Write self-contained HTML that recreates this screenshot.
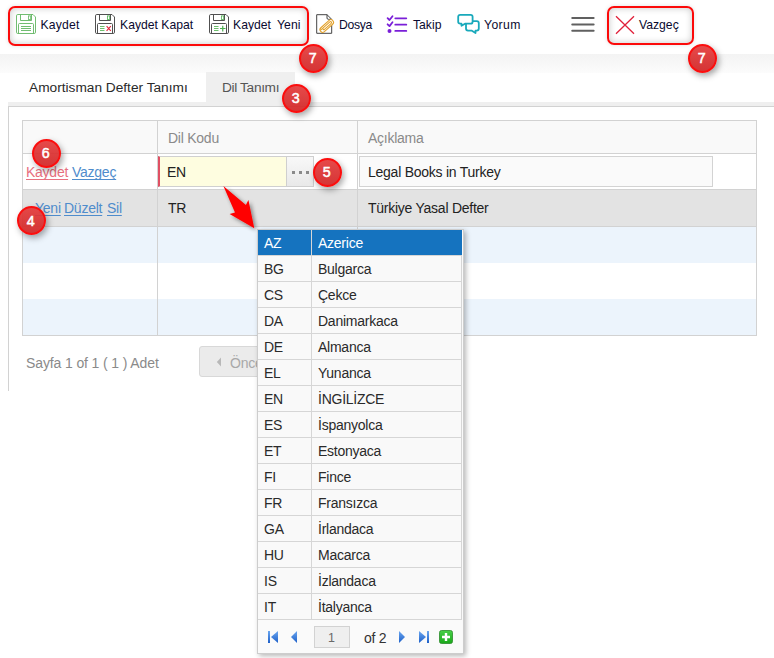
<!DOCTYPE html>
<html><head><meta charset="utf-8">
<style>
html,body{margin:0;padding:0;width:774px;height:658px;overflow:hidden;background:#fff;position:relative;font-family:"Liberation Sans",sans-serif;}
.a{position:absolute;white-space:nowrap;}
.tb{font-size:12.2px;color:#0a0a30;line-height:14px;}
.g{font-size:14px;line-height:16px;letter-spacing:-0.25px;}
.rbox{position:absolute;border:2.5px solid #fc0a0a;border-radius:7px;box-shadow:inset 0 0 7px rgba(0,0,0,0.22),0 0 4px rgba(0,0,0,0.12);box-sizing:border-box;}
.badge{position:absolute;width:29px;height:29px;border-radius:50%;background:linear-gradient(rgba(228,60,60,0.93),rgba(210,38,38,0.93));border:2px solid #fb0e0e;box-sizing:border-box;box-shadow:2px 3px 6px rgba(0,0,0,0.35);color:#fff;}
.badge span{position:absolute;left:0;right:0;top:3.5px;text-align:center;font-family:"Liberation Sans",sans-serif;font-weight:normal;-webkit-text-stroke:0.55px #fff;font-size:15.5px;line-height:17px;transform:translateX(-0.8px) scaleX(0.92);}
.lnk{text-decoration:underline;text-underline-offset:1.5px;text-decoration-skip-ink:none;}
</style></head><body>

<!-- toolbar band -->
<div class="a" style="left:0;top:54px;width:774px;height:19px;background:linear-gradient(#f3f3f3,#fcfcfc);"></div>

<div class="rbox" style="left:8px;top:5.5px;width:300.5px;height:40.5px;"></div>
<div class="rbox" style="left:607px;top:5.5px;width:87.3px;height:39px;"></div>

<!-- Kaydet icon -->
<svg class="a" style="left:16px;top:14px" width="20" height="20" viewBox="0 0 20 20" fill="none" stroke="#62b562" stroke-width="0.9">
<path d="M0.5,1.8 Q0.5,0.5 1.8,0.5 H17 L19.5,3 V18.2 Q19.5,19.5 18.2,19.5 H1.8 Q0.5,19.5 0.5,18.2 Z"/>
<path d="M4.5,0.5 V6.5 H15.5 V0.5"/><rect x="12.4" y="1.9" width="2.3" height="3.6" stroke-width="0.8"/>
<path d="M2.5,19.5 V10.5 Q2.5,9.5 3.5,9.5 H16.5 Q17.5,9.5 17.5,10.5 V19.5"/>
<path d="M5,12.5 H15 M5,14.5 H15 M5,16.5 H15"/>
</svg>
<div class="a tb" style="left:40.5px;top:18px;letter-spacing:0.2px;">Kaydet</div>

<!-- Kaydet Kapat icon -->
<svg class="a" style="left:95px;top:14px" width="20" height="20" viewBox="0 0 20 20" fill="none" stroke="#505050" stroke-width="1">
<path d="M0.5,1.8 Q0.5,0.5 1.8,0.5 H17 L19.5,3 V18.2 Q19.5,19.5 18.2,19.5 H1.8 Q0.5,19.5 0.5,18.2 Z"/>
<path d="M4.5,0.5 V6.5 H15.5 V0.5"/><rect x="12.4" y="1.9" width="2.3" height="3.6" stroke-width="0.8" stroke="#4caf50"/>
<path d="M2.5,19.5 V10.5 Q2.5,9.5 3.5,9.5 H16.5 Q17.5,9.5 17.5,10.5 V19.5"/>
<path d="M5,12.5 H9.5 M5,14.5 H9.5 M5,16.5 H9.5" stroke="#5cb85c" stroke-width="0.9"/>
<path d="M11.6,12.2 L15.8,16.8 M15.8,12.2 L11.6,16.8" stroke="#e3263c" stroke-width="1.1"/>
</svg>
<div class="a tb" style="left:120px;top:18px;">Kaydet Kapat</div>

<!-- Kaydet Yeni icon -->
<svg class="a" style="left:209px;top:14px" width="20" height="20" viewBox="0 0 20 20" fill="none" stroke="#505050" stroke-width="1">
<path d="M0.5,1.8 Q0.5,0.5 1.8,0.5 H17 L19.5,3 V18.2 Q19.5,19.5 18.2,19.5 H1.8 Q0.5,19.5 0.5,18.2 Z"/>
<path d="M4.5,0.5 V6.5 H15.5 V0.5"/><rect x="12.4" y="1.9" width="2.3" height="3.6" stroke-width="0.8" stroke="#4caf50"/>
<path d="M2.5,19.5 V10.5 Q2.5,9.5 3.5,9.5 H16.5 Q17.5,9.5 17.5,10.5 V19.5"/>
<path d="M5,12.5 H9.5 M5,14.5 H9.5 M5,16.5 H9.5" stroke="#5cb85c" stroke-width="0.9"/>
<path d="M11,14.5 H16.5 M13.75,11.7 V17.5" stroke="#4caf50" stroke-width="1.2"/>
</svg>
<div class="a tb" style="left:233px;top:18px;word-spacing:3px;">Kaydet Yeni</div>

<!-- Dosya icon -->
<svg class="a" style="left:314px;top:12px" width="22" height="24" viewBox="0 0 22 24" fill="none">
<path d="M2.7,2.7 H13 L17.7,7.3 V21.3 H2.7 Z" stroke="#444" stroke-width="1" stroke-linejoin="round"/>
<path d="M13,2.7 V6 Q13,7.3 14.3,7.3 H17.7" stroke="#444" stroke-width="1"/>
<g transform="translate(13.2,13.6) rotate(-42) scale(0.82)" stroke="#e3a22c" stroke-width="1.3" stroke-linecap="round">
<path d="M-9,-1.2 H-6.5 M-7.5,3.2 H6 A3.2,3.2 0 0 0 6,-3.2 H-7.5 A3.2,3.2 0 0 0 -7.5,3.2 Z" fill="#fff"/>
<path d="M-6.5,1.2 H5.5 A1.2,1.2 0 0 0 5.5,-1.2 H-5.5 A1.2,1.2 0 0 0 -5.5,1.2" fill="none"/>
</g>
</svg>
<div class="a tb" style="left:339px;top:18px;letter-spacing:-0.3px;">Dosya</div>

<!-- Takip icon -->
<svg class="a" style="left:386px;top:14px" width="22" height="20" viewBox="0 0 22 20" fill="none" stroke="#7a1fd8" stroke-width="1.8" stroke-linecap="round" stroke-linejoin="round">
<path d="M1.6,4.2 L3.5,6 L6.5,2.2"/>
<path d="M1.6,10.3 L3.5,12.1 L6.5,8.3"/>
<circle cx="3.5" cy="16.9" r="1.1" fill="#7a1fd8"/>
<path d="M9.3,4.3 H20.3 M9.3,10.7 H20.3 M9.3,16.9 H20.3"/>
</svg>
<div class="a tb" style="left:413px;top:18px;">Takip</div>

<!-- Yorum icon -->
<svg class="a" style="left:456px;top:13px" width="25" height="22" viewBox="0 0 25 22" fill="none" stroke="#19a9bb" stroke-width="1.8" stroke-linejoin="round">
<path d="M4.2,1.8 H14.6 Q16.6,1.8 16.6,3.8 V8.7 Q16.6,10.7 14.6,10.7 H9 L5.5,12.8 V10.7 H4.2 Q2.2,10.7 2.2,8.7 V3.8 Q2.2,1.8 4.2,1.8 Z"/>
<path d="M16.6,8.2 H20.8 Q22.8,8.2 22.8,10.2 V15.6 Q22.8,17.6 20.8,17.6 H19.5 V20 L15.5,17.6 H12 Q10,17.6 10,15.6 V10.7"/>
</svg>
<div class="a tb" style="left:484px;top:18px;letter-spacing:0.4px;">Yorum</div>

<!-- hamburger -->
<svg class="a" style="left:570px;top:16px" width="27" height="17" viewBox="0 0 27 17" stroke="#606060" stroke-width="2.1" stroke-linecap="round">
<path d="M2.3,2 H23.6 M2.3,8.5 H23.6 M2.3,14.8 H23.6"/>
</svg>

<!-- X icon -->
<svg class="a" style="left:614px;top:15px" width="22" height="21" viewBox="0 0 22 21" stroke="#e0203a" stroke-width="1.3">
<path d="M2,1.3 L20,18.7 M20,1.3 L2,18.7"/>
</svg>
<div class="a tb" style="left:639px;top:18px;">Vazgeç</div>

<!-- Tabs -->
<div class="a" style="left:206px;top:72px;width:89px;height:30px;background:#efefef;"></div>
<div class="a g" style="left:29px;top:80px;color:#2a2a2a;font-size:13.7px;letter-spacing:0;">Amortisman Defter Tanımı</div>
<div class="a g" style="left:222px;top:80px;color:#555;font-size:13.7px;letter-spacing:-0.35px;">Dil Tanımı</div>

<!-- panel -->
<div class="a" style="left:8px;top:102px;width:766px;height:4px;background:#efefef;"></div>
<div class="a" style="left:8px;top:106px;width:766px;height:1px;background:#d2d2d2;"></div>
<div class="a" style="left:8px;top:106px;width:1px;height:285px;background:#d2d2d2;"></div>


<!-- grid -->
<div class="a" style="left:22px;top:120px;width:735px;height:216px;box-sizing:border-box;border:1px solid #d2d2d2;background:#fff;"></div>
<div class="a" style="left:23px;top:121px;width:733px;height:32px;background:#f9f9f9;"></div>
<div class="a" style="left:23px;top:153px;width:733px;height:1px;background:#d2d2d2;"></div>
<div class="a" style="left:23px;top:189px;width:733px;height:1px;background:#d2d2d2;"></div>
<div class="a" style="left:23px;top:190px;width:733px;height:36px;background:#e3e3e3;"></div>
<div class="a" style="left:23px;top:226px;width:733px;height:1px;background:#d2d2d2;"></div>
<div class="a" style="left:23px;top:227px;width:733px;height:36px;background:#ecf4fc;"></div>
<div class="a" style="left:23px;top:299px;width:733px;height:36px;background:#ecf4fc;"></div>
<div class="a" style="left:157px;top:121px;width:1px;height:214px;background:#d2d2d2;"></div>
<div class="a" style="left:357px;top:121px;width:1px;height:214px;background:#d2d2d2;"></div>
<div class="a g" style="left:168px;top:130px;color:#8a8a8a;">Dil Kodu</div>
<div class="a g" style="left:368px;top:130px;color:#8a8a8a;">Açıklama</div>

<!-- row1 edit -->
<div class="a g lnk" style="left:26px;top:164px;color:#e8707e;">Kaydet</div>
<div class="a g lnk" style="left:72px;top:164px;color:#4f8ccc;">Vazgeç</div>
<div class="a" style="left:158px;top:156px;width:156px;height:31px;box-sizing:border-box;border:1px solid #d0d0d0;border-left:2px solid #e05063;background:#fefde0;"></div>
<div class="a" style="left:286px;top:156px;width:28px;height:31px;box-sizing:border-box;border:1px solid #cfcfcf;background:linear-gradient(#f8f8f8,#e9e9e9);"></div>
<div class="a" style="left:292px;top:170.5px;width:3px;height:3px;background:#8a8a8a;"></div>
<div class="a" style="left:299px;top:170.5px;width:3px;height:3px;background:#8a8a8a;"></div>
<div class="a" style="left:305.5px;top:170.5px;width:3px;height:3px;background:#8a8a8a;"></div>
<div class="a g" style="left:167px;top:164px;color:#222;">EN</div>
<div class="a" style="left:359px;top:156px;width:354px;height:31px;box-sizing:border-box;border:1px solid #d3d3d3;background:#fafafa;"></div>
<div class="a g" style="left:368px;top:164px;color:#222;">Legal Books in Turkey</div>

<!-- row2 -->
<div class="a g lnk" style="left:35px;top:200px;color:#4f8ccc;">Yeni</div>
<div class="a g lnk" style="left:64px;top:200px;color:#4f8ccc;">Düzelt</div>
<div class="a g lnk" style="left:107px;top:200px;color:#4f8ccc;">Sil</div>
<div class="a g" style="left:168px;top:200px;color:#222;">TR</div>
<div class="a g" style="left:368px;top:200px;color:#222;">Türkiye Yasal Defter</div>

<!-- pager -->
<div class="a g" style="left:26px;top:355px;color:#8a8a8a;letter-spacing:-0.12px;">Sayfa 1 of 1 ( 1 ) Adet</div>
<div class="a" style="left:199px;top:346px;width:70px;height:31px;box-sizing:border-box;border:1px solid #d8d8d8;border-radius:3px;background:#ebebeb;"></div>
<svg class="a" style="left:216px;top:357px" width="6" height="10" viewBox="0 0 6 10"><path d="M5,0.5 V9.5 L0.8,5 Z" fill="#b8b8b8"/></svg>
<div class="a g" style="left:230px;top:355px;color:#a8a8a8;">Önceki</div>


<!-- popup -->
<div class="a" style="left:257px;top:229px;width:207px;height:425px;box-sizing:border-box;border:1px solid #cdcdcd;background:#f9f9f9;box-shadow:2px 2px 5px rgba(0,0,0,0.28);"></div>
<div class="a" style="left:258px;top:230px;width:204px;height:25px;background:#1573bf;"></div>
<div class="a" style="left:258px;top:255px;width:204px;height:1px;background:#d6d6d6;"></div>
<div class="a g" style="left:264px;top:235px;color:#fff;">AZ</div>
<div class="a g" style="left:318px;top:235px;color:#fff;">Azerice</div>
<div class="a" style="left:258px;top:281px;width:204px;height:1px;background:#d6d6d6;"></div>
<div class="a g" style="left:264px;top:261px;color:#2a2a2a;">BG</div>
<div class="a g" style="left:318px;top:261px;color:#2a2a2a;">Bulgarca</div>
<div class="a" style="left:258px;top:307px;width:204px;height:1px;background:#d6d6d6;"></div>
<div class="a g" style="left:264px;top:287px;color:#2a2a2a;">CS</div>
<div class="a g" style="left:318px;top:287px;color:#2a2a2a;">Çekce</div>
<div class="a" style="left:258px;top:333px;width:204px;height:1px;background:#d6d6d6;"></div>
<div class="a g" style="left:264px;top:313px;color:#2a2a2a;">DA</div>
<div class="a g" style="left:318px;top:313px;color:#2a2a2a;">Danimarkaca</div>
<div class="a" style="left:258px;top:359px;width:204px;height:1px;background:#d6d6d6;"></div>
<div class="a g" style="left:264px;top:339px;color:#2a2a2a;">DE</div>
<div class="a g" style="left:318px;top:339px;color:#2a2a2a;">Almanca</div>
<div class="a" style="left:258px;top:385px;width:204px;height:1px;background:#d6d6d6;"></div>
<div class="a g" style="left:264px;top:365px;color:#2a2a2a;">EL</div>
<div class="a g" style="left:318px;top:365px;color:#2a2a2a;">Yunanca</div>
<div class="a" style="left:258px;top:411px;width:204px;height:1px;background:#d6d6d6;"></div>
<div class="a g" style="left:264px;top:391px;color:#2a2a2a;">EN</div>
<div class="a g" style="left:318px;top:391px;color:#2a2a2a;">İNGİLİZCE</div>
<div class="a" style="left:258px;top:437px;width:204px;height:1px;background:#d6d6d6;"></div>
<div class="a g" style="left:264px;top:417px;color:#2a2a2a;">ES</div>
<div class="a g" style="left:318px;top:417px;color:#2a2a2a;">İspanyolca</div>
<div class="a" style="left:258px;top:463px;width:204px;height:1px;background:#d6d6d6;"></div>
<div class="a g" style="left:264px;top:443px;color:#2a2a2a;">ET</div>
<div class="a g" style="left:318px;top:443px;color:#2a2a2a;">Estonyaca</div>
<div class="a" style="left:258px;top:489px;width:204px;height:1px;background:#d6d6d6;"></div>
<div class="a g" style="left:264px;top:469px;color:#2a2a2a;">FI</div>
<div class="a g" style="left:318px;top:469px;color:#2a2a2a;">Fince</div>
<div class="a" style="left:258px;top:515px;width:204px;height:1px;background:#d6d6d6;"></div>
<div class="a g" style="left:264px;top:495px;color:#2a2a2a;">FR</div>
<div class="a g" style="left:318px;top:495px;color:#2a2a2a;">Fransızca</div>
<div class="a" style="left:258px;top:541px;width:204px;height:1px;background:#d6d6d6;"></div>
<div class="a g" style="left:264px;top:521px;color:#2a2a2a;">GA</div>
<div class="a g" style="left:318px;top:521px;color:#2a2a2a;">İrlandaca</div>
<div class="a" style="left:258px;top:567px;width:204px;height:1px;background:#d6d6d6;"></div>
<div class="a g" style="left:264px;top:547px;color:#2a2a2a;">HU</div>
<div class="a g" style="left:318px;top:547px;color:#2a2a2a;">Macarca</div>
<div class="a" style="left:258px;top:593px;width:204px;height:1px;background:#d6d6d6;"></div>
<div class="a g" style="left:264px;top:573px;color:#2a2a2a;">IS</div>
<div class="a g" style="left:318px;top:573px;color:#2a2a2a;">İzlandaca</div>
<div class="a" style="left:258px;top:619px;width:204px;height:1px;background:#d6d6d6;"></div>
<div class="a g" style="left:264px;top:599px;color:#2a2a2a;">IT</div>
<div class="a g" style="left:318px;top:599px;color:#2a2a2a;">İtalyanca</div>
<div class="a" style="left:311px;top:230px;width:1px;height:389px;background:#d6d6d6;"></div>
<div class="a" style="left:461px;top:256px;width:1px;height:363px;background:#d6d6d6;"></div>
<div class="a" style="left:258px;top:620px;width:204px;height:33px;background:#fafafa;"></div>
<svg class="a" style="left:266px;top:630px" width="14" height="14" viewBox="0 0 14 14">
<defs><linearGradient id="bl" x1="0" y1="0" x2="0" y2="1"><stop offset="0" stop-color="#6aa6f0"/><stop offset="1" stop-color="#1d5fc8"/></linearGradient></defs>
<rect x="2" y="1" width="2" height="12" fill="url(#bl)"/><path d="M12,1 V13 L5,7 Z" fill="url(#bl)"/></svg>
<svg class="a" style="left:289px;top:630px" width="10" height="14" viewBox="0 0 10 14"><path d="M8,1 V13 L2,7 Z" fill="url(#bl)"/></svg>
<div class="a" style="left:314px;top:626px;width:36px;height:22px;box-sizing:border-box;border:1px solid #d2d2d2;background:#efefef;"></div>
<div class="a g" style="left:328px;top:630px;color:#6a6a6a;font-size:12.5px;">1</div>
<div class="a g" style="left:364px;top:629.5px;color:#333;">of 2</div>
<svg class="a" style="left:397px;top:630px" width="10" height="14" viewBox="0 0 10 14"><path d="M2,1 V13 L8,7 Z" fill="url(#bl)"/></svg>
<svg class="a" style="left:417px;top:630px" width="14" height="14" viewBox="0 0 14 14"><path d="M2,1 V13 L9,7 Z" fill="url(#bl)"/><rect x="10" y="1" width="2" height="12" fill="url(#bl)"/></svg>
<svg class="a" style="left:439px;top:630px" width="14" height="14" viewBox="0 0 14 14">
<defs><linearGradient id="gr" x1="0" y1="0" x2="0" y2="1"><stop offset="0" stop-color="#48d048"/><stop offset="1" stop-color="#1aa81a"/></linearGradient></defs>
<rect x="0.5" y="0.5" width="13" height="13" rx="2" fill="url(#gr)" stroke="#2c8a2c" stroke-width="0.8"/><path d="M7,3 V11 M3,7 H11" stroke="#fff" stroke-width="2.4"/></svg>


<!-- arrow -->
<svg class="a" style="left:210px;top:175px;overflow:visible" width="60" height="65" viewBox="210 175 60 65">
<defs><filter id="sh" x="-50%" y="-50%" width="200%" height="200%"><feGaussianBlur in="SourceAlpha" stdDeviation="2"/><feOffset dx="2" dy="2"/><feComponentTransfer><feFuncA type="linear" slope="0.45"/></feComponentTransfer><feMerge><feMergeNode/><feMergeNode in="SourceGraphic"/></feMerge></filter></defs>
<path d="M223.4,185.9 L245.9,205 L248.4,200 L254.3,228.3 L229.6,213.9 L235,212.6 Z" fill="#ff0000" filter="url(#sh)"/>
</svg>
<div class="badge" style="left:298.5px;top:43.5px;"><span>7</span></div>
<div class="badge" style="left:687.5px;top:43.5px;"><span>7</span></div>
<div class="badge" style="left:281.5px;top:83.5px;"><span>3</span></div>
<div class="badge" style="left:31.5px;top:138.5px;"><span>6</span></div>
<div class="badge" style="left:16.5px;top:206.0px;"><span>4</span></div>
<div class="badge" style="left:312.5px;top:157.5px;"><span>5</span></div>

</body></html>
